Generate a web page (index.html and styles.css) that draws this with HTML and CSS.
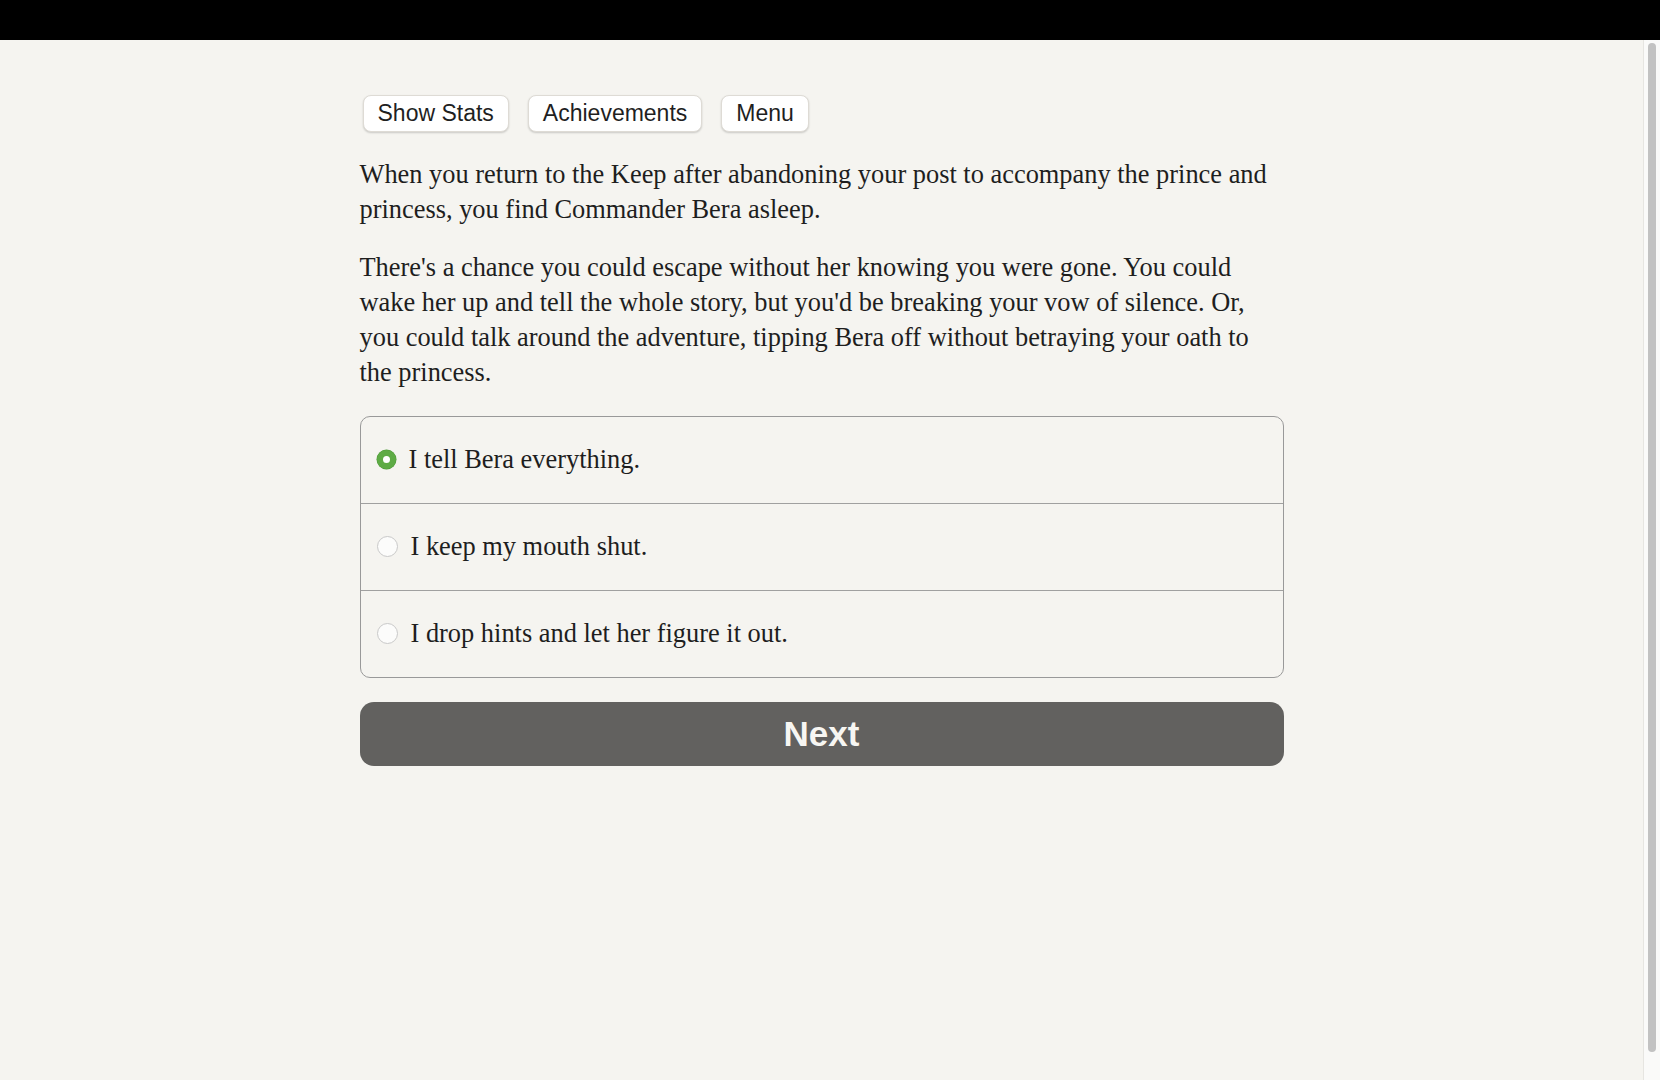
FILE: index.html
```html
<!DOCTYPE html>
<html lang="en">
<head>
<meta charset="utf-8">
<title>Choice</title>
<link rel="stylesheet" href="styles.css">
</head>
<body>
<div class="topbar"></div>
<div class="viewport">
  <div class="content">
    <main class="main">
      <div class="buttons">
        <button class="btn">Show Stats</button>
        <button class="btn">Achievements</button>
        <button class="btn">Menu</button>
      </div>
      <p class="para">When you return to the Keep after abandoning your post to accompany the prince and princess, you find Commander Bera asleep.</p>
      <p class="para">There's a chance you could escape without her knowing you were gone. You could wake her up and tell the whole story, but you'd be breaking your vow of silence. Or, you could talk around the adventure, tipping Bera off without betraying your oath to the princess.</p>
      <div class="choices">
        <label class="choice"><span class="radio radio-on"></span><span class="choice-text">I tell Bera everything.</span></label>
        <label class="choice"><span class="radio"></span><span class="choice-text">I keep my mouth shut.</span></label>
        <label class="choice"><span class="radio"></span><span class="choice-text">I drop hints and let her figure it out.</span></label>
      </div>
      <button class="next">Next</button>
    </main>
  </div>
  <div class="scrollbar"><div class="thumb"></div></div>
</div>
</body>
</html>
```
FILE: styles.css
```css
html, body {
  margin: 0;
  padding: 0;
  height: 100%;
  overflow: hidden;
  background: #f5f4f0;
}

.topbar {
  height: 40px;
  background: #000;
}

.viewport {
  display: flex;
  height: 1040px;
  background: #f5f4f0;
}

.content {
  flex: 1;
  min-width: 0;
}

.scrollbar {
  width: 17px;
  flex: none;
  background: #fafaf9;
  border-left: 1px solid #e6e5e1;
  padding: 3px 4px 28px 4px;
  box-sizing: border-box;
  display: flex;
}

.thumb {
  flex: 1;
  background: #c2c2c2;
  border-radius: 5px;
}

.main {
  width: 924px;
  margin: 0 auto;
  padding-top: 55px;
  font-family: "Liberation Serif", "Times New Roman", serif;
  font-size: 26.4px;
  line-height: 35px;
  color: #1e1e1e;
}

.buttons {
  display: flex;
  gap: 19px;
  padding-left: 3px;
}

.btn {
  font-family: "Liberation Sans", Arial, sans-serif;
  font-size: 23px;
  color: #1f1f1f;
  background: #fff;
  border: 1px solid #dedbd5;
  border-radius: 8px;
  height: 37px;
  padding: 0 14px;
  box-shadow: 0 1px 2px rgba(0, 0, 0, 0.18);
  line-height: 35px;
}

.para {
  max-width: 915px;
  margin: 23px 0 0;
}
.para:first-of-type {
  margin-top: 25px;
}

.choices {
  margin-top: 26px;
  border: 1px solid #999;
  border-radius: 10px;
  overflow: hidden;
}

.choice {
  display: flex;
  align-items: center;
  padding: 25px 16px 26px;
  border-top: 1px solid #a0a0a0;
}
.choice:first-child {
  border-top: none;
}

.radio {
  width: 19px;
  height: 19px;
  border-radius: 50%;
  background: #fcfcfb;
  border: 1px solid #c9c9c9;
  margin-right: 13px;
  flex: none;
  box-sizing: content-box;
}
.radio-on {
  background: #fff;
  border: 6px solid #5eab45;
  width: 7px;
  height: 7px;
  border-radius: 50%;
  box-shadow: 0 0 0 0.5px #4e9a38;
}

.next {
  display: block;
  width: 100%;
  height: 64px;
  margin-top: 24px;
  background: #62615f;
  color: #f7f6f2;
  border: none;
  border-radius: 14px;
  font-family: "Liberation Sans", Arial, sans-serif;
  font-weight: bold;
  font-size: 35px;
  padding: 0;
}
```
